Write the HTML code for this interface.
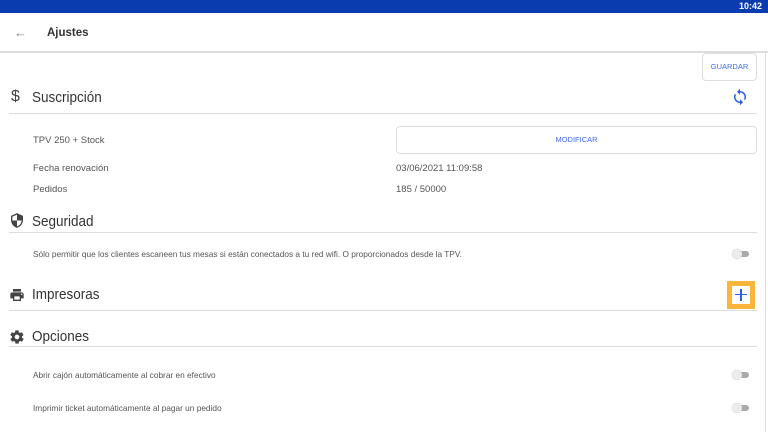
<!DOCTYPE html>
<html><head><style>
*{margin:0;padding:0;box-sizing:border-box}
body{width:768px;height:432px;overflow:hidden;background:#fff;font-family:"Liberation Sans",sans-serif;position:relative;color:#333}
.a{position:absolute}
.h{font-size:15px;color:#333;transform:scaleX(0.9);transform-origin:left}
.line{position:absolute;left:9px;width:748px;height:1px;background:#ddd}
.s{font-size:9.5px;color:#555}
.t{font-size:8.3px;color:#555}
.tg{position:absolute;width:18px;height:10px}
.tg i{position:absolute;left:5px;top:2px;width:12px;height:6px;border-radius:3px;background:#aaa}
.tg b{position:absolute;left:0;top:0;width:10px;height:10px;border-radius:50%;background:#ececec;box-shadow:0 0 1px #aaa}
</style></head><body>
<div class="a" style="left:0;top:0;width:768px;height:13px;background:#0a3cb0"></div>
<div class="a" style="right:6px;top:1px;font-size:9px;color:#fff;font-weight:bold">10:42</div>
<div class="a" style="left:0;top:51px;width:768px;height:2px;background:#ddd"></div>
<div class="a" style="left:14px;top:25px;font-size:13px;color:#888">&#8592;</div>
<div class="a" style="left:47px;top:27px;font-size:11.5px;font-weight:bold;color:#333">Ajustes</div>
<div class="a" style="left:702px;top:53px;width:55px;height:28px;border:1px solid #ddd;border-radius:4px;font-size:7.5px;color:#3d6bf0;text-align:center;line-height:26px">GUARDAR</div>

<div class="a" style="left:11px;top:88px;font-size:16px;color:#444">$</div>
<div class="a h" style="left:32px;top:89px">Suscripción</div>
<svg class="a" style="left:731px;top:88px" width="18" height="18" viewBox="0 0 24 24"><path fill="#2a5ee8" d="M12 4V1L8 5l4 4V6c3.3 0 6 2.7 6 6 0 1-.25 2-.7 2.8l1.46 1.46A7.9 7.9 0 0 0 20 12c0-4.4-3.6-8-8-8zm0 14c-3.3 0-6-2.7-6-6 0-1 .25-2 .7-2.8L5.24 7.74A7.9 7.9 0 0 0 4 12c0 4.4 3.6 8 8 8v3l4-4-4-4v3z"/></svg>
<div class="line" style="top:113px"></div>
<div class="a s" style="left:33px;top:135px">TPV 250 + Stock</div>
<div class="a" style="left:396px;top:126px;width:361px;height:28px;border:1px solid #ddd;border-radius:4px;font-size:7.5px;color:#3d6bf0;text-align:center;line-height:26px">MODIFICAR</div>
<div class="a s" style="left:33px;top:163px">Fecha renovación</div>
<div class="a s" style="left:396px;top:163px">03/06/2021 11:09:58</div>
<div class="a s" style="left:33px;top:184px">Pedidos</div>
<div class="a s" style="left:396px;top:184px">185 / 50000</div>

<svg class="a" style="left:9px;top:212px" width="16" height="17" viewBox="0 0 24 24"><path fill="#444" d="M12 1L3 5v6c0 5.5 3.8 10.7 9 12 5.2-1.3 9-6.5 9-12V5l-9-4zm0 11h7c-.5 4.1-3.3 7.8-7 8.9V12H5V6.3l7-3.1V12z"/></svg>
<div class="a h" style="left:32px;top:213px">Seguridad</div>
<div class="line" style="top:232px"></div>
<div class="a t" style="left:33px;top:249px">Sólo permitir que los clientes escaneen tus mesas si están conectados a tu red wifi. O proporcionados desde la TPV.</div>
<div class="tg" style="left:732px;top:249px"><i></i><b></b></div>

<svg class="a" style="left:9px;top:287px" width="16" height="16" viewBox="0 0 24 24"><path fill="#444" d="M19 8H5c-1.7 0-3 1.3-3 3v6h4v4h12v-4h4v-6c0-1.7-1.3-3-3-3zm-3 11H8v-5h8v5zm3-7c-.6 0-1-.4-1-1s.4-1 1-1 1 .4 1 1-.4 1-1 1zm-1-9H6v4h12V3z"/></svg>
<div class="a h" style="left:32px;top:286px">Impresoras</div>
<div class="a" style="left:727px;top:281px;width:28px;height:28px;background:#fbb53b"></div>
<div class="a" style="left:732px;top:286px;width:18px;height:18px;background:#fff"></div>
<div class="a" style="left:735px;top:294px;width:12px;height:1.3px;background:#2a5ee8"></div>
<div class="a" style="left:740.4px;top:289px;width:1.3px;height:12px;background:#2a5ee8"></div>
<div class="line" style="top:310px"></div>

<svg class="a" style="left:9px;top:329px" width="16" height="16" viewBox="0 0 24 24"><path fill="#444" d="M19.4 13c.04-.3.06-.7.06-1s-.02-.7-.06-1l2.1-1.7c.2-.15.25-.4.1-.6l-2-3.5c-.1-.2-.4-.3-.6-.2l-2.5 1c-.5-.4-1.1-.7-1.7-1l-.4-2.6c0-.2-.2-.4-.5-.4h-4c-.25 0-.45.2-.5.4l-.4 2.6c-.6.25-1.200.6-1.7 1l-2.5-1c-.2-.1-.5 0-.6.2l-2 3.5c-.1.2-.1.5.1.6L4.6 11c-.04.3-.1.7-.1 1s.02.7.06 1l-2.1 1.7c-.2.15-.25.4-.1.6l2 3.5c.1.2.4.3.6.2l2.5-1c.5.4 1.1.7 1.7 1l.4 2.6c0 .2.25.4.5.4h4c.25 0 .45-.2.5-.4l.4-2.6c.6-.25 1.2-.6 1.7-1l2.5 1c.2.1.5 0 .6-.2l2-3.5c.1-.2.06-.45-.1-.6L19.4 13zM12 15.5c-1.9 0-3.5-1.6-3.5-3.5s1.6-3.5 3.5-3.5 3.5 1.6 3.5 3.5-1.6 3.5-3.5 3.5z"/></svg>
<div class="a h" style="left:32px;top:328px">Opciones</div>
<div class="line" style="top:346px"></div>
<div class="a t" style="left:33px;top:370px">Abrir cajón automáticamente al cobrar en efectivo</div>
<div class="tg" style="left:732px;top:370px"><i></i><b></b></div>
<div class="a t" style="left:33px;top:403px">Imprimir ticket automáticamente al pagar un pedido</div>
<div class="tg" style="left:732px;top:403px"><i></i><b></b></div>
<div class="a" style="left:765px;top:53px;width:1px;height:379px;background:#ddd"></div>
</body></html>
